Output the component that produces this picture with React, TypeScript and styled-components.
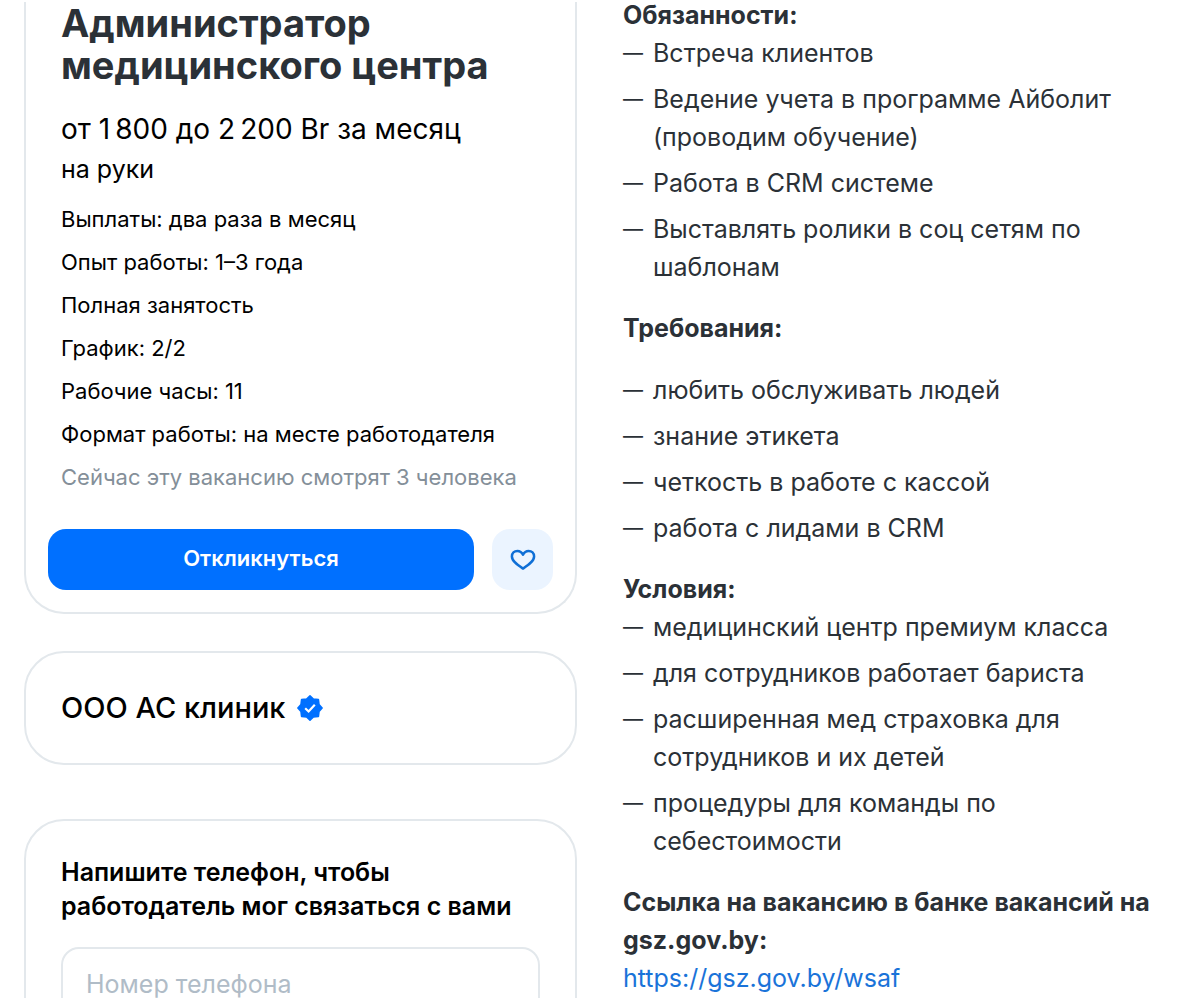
import React from "react";
import styled, { createGlobalStyle } from "styled-components";

const GlobalStyle = createGlobalStyle`
  * { box-sizing: border-box; }
  body {
    margin: 0;
    background: #ffffff;
    color: #000000;
    font-family: Inter, "Liberation Sans", sans-serif;
  }
  h1, h2, h3, p, ul { margin: 0; padding: 0; font-size: inherit; }
`;

const Page = styled.main`
  display: grid;
  grid-template-columns: 553fr 537fr;
  align-items: start;
  gap: 46px;
  height: 100vh;
  padding: 0 40px 0 24px;
  border: solid #ffffff;
  border-width: 2px 0;
  overflow: hidden;
`;

const Column = styled.div`
  display: flex;
  flex-direction: column;
  min-width: 0;
`;

const Card = styled.section<{ $open?: boolean }>`
  border: 2px solid #e3e8ec;
  border-radius: ${(p) => (p.$open ? "0 0 40px 40px" : "40px")};
  border-top-width: ${(p) => (p.$open ? "0" : "2px")};
`;

const Summary = styled.div`
  padding: 0 35px;
`;

const Title = styled.h1`
  color: #2b3137;
  font-size: 38px;
  line-height: 42px;
  font-weight: 700;
`;

const Salary = styled.p`
  margin-top: 22px;
  font-size: 28px;
  line-height: 42px;
`;

const SalaryNote = styled.p`
  font-size: 25px;
  line-height: 38px;
`;

const Facts = styled.ul`
  margin-top: 10px;
  list-style: none;
  font-size: 22px;
  line-height: 43px;
`;

const Fact = styled.li<{ $muted?: boolean }>`
  color: ${(p) => (p.$muted ? "#848f99" : "inherit")};
`;

const Actions = styled.div`
  display: flex;
  gap: 18px;
  padding: 30px 22px 22px;
`;

const ApplyButton = styled.button`
  flex: 1;
  height: 61px;
  padding: 0 0 3px;
  border: 0;
  border-radius: 18px;
  background: #0070ff;
  color: #ffffff;
  font-family: inherit;
  font-size: 22px;
  font-weight: 600;
`;

const FavoriteButton = styled.button`
  display: flex;
  align-items: center;
  justify-content: center;
  width: 61px;
  height: 61px;
  padding: 0;
  border: 0;
  border-radius: 18px;
  background: #ebf4ff;
  color: #0f6fd6;
`;

const EmployerCard = styled(Card)`
  display: flex;
  align-items: center;
  gap: 12px;
  margin-top: 37px;
  padding: 36px 35px;
`;

const EmployerName = styled.h2`
  font-size: 29px;
  line-height: 38px;
  font-weight: 500;
`;

const PhoneCard = styled(Card)`
  margin-top: 54px;
  padding: 34px 35px 40px;
`;

const PhoneLabel = styled.label`
  display: block;
  font-size: 25px;
  line-height: 34px;
  font-weight: 600;
`;

const PhoneInput = styled.input`
  display: block;
  width: 100%;
  height: 73px;
  margin-top: 24px;
  padding: 0 23px;
  border: 2px solid #e3e8ec;
  border-radius: 18px;
  background: #ffffff;
  font-family: inherit;
  font-size: 25px;
  &::placeholder { color: #b0bcc7; opacity: 1; }
`;

const Description = styled(Column)`
  gap: 23px;
  margin-top: -6px;
  color: #2b3137;
  font-size: 25px;
  line-height: 38px;
`;

const Block = styled.section<{ $spaced?: boolean }>`
  display: flex;
  flex-direction: column;
  gap: ${(p) => (p.$spaced ? "24px" : "0")};
`;

const Heading = styled.h3`
  font-weight: 700;
`;

const Items = styled.ul`
  display: flex;
  flex-direction: column;
  gap: 8px;
  list-style: none;
`;

const Item = styled.li`
  display: grid;
  grid-template-columns: 30px 1fr;
  &::before { content: "—"; font-size: 20px; }
`;

const Link = styled.a`
  color: #1a73d9;
  text-decoration: none;
`;

const facts = [
  "Выплаты: два раза в месяц",
  "Опыт работы: 1–3 года",
  "Полная занятость",
  "График: 2/2",
  "Рабочие часы: 11",
  "Формат работы: на месте работодателя",
];

const blocks = [
  {
    title: "Обязанности:",
    items: [
      "Встреча клиентов",
      "Ведение учета в программе Айболит (проводим обучение)",
      "Работа в CRM системе",
      "Выставлять ролики в соц сетям по шаблонам",
    ],
  },
  {
    title: "Требования:",
    spaced: true,
    items: [
      "любить обслуживать людей",
      "знание этикета",
      "четкость в работе с кассой",
      "работа с лидами в CRM",
    ],
  },
  {
    title: "Условия:",
    items: [
      "медицинский центр премиум класса",
      "для сотрудников работает бариста",
      "расширенная мед страховка для сотрудников и их детей",
      "процедуры для команды по себестоимости",
    ],
  },
];

const HeartIcon = () => (
  <svg width="26" height="22" viewBox="0 0 26 22" fill="none" aria-hidden="true">
    <path
      d="M13 5.8C11.8 3.2 9.8 1.9 7.4 1.9C4.3 1.9 1.9 4.2 1.9 7.4C1.9 12.2 7.6 16 13 19.6C18.4 16 24.1 12.2 24.1 7.4C24.1 4.2 21.7 1.9 18.6 1.9C16.2 1.9 14.2 3.2 13 5.8Z"
      stroke="currentColor"
      strokeWidth="2.5"
      strokeLinejoin="round"
    />
  </svg>
);

const VerifiedIcon = () => (
  <svg width="26" height="26" viewBox="0 0 26 26" role="img" aria-label="Проверенный работодатель">
    <path
      d="M13 .9L16.4 4L21.4 4.6L22 9.6L25.1 13L22 16.4L21.4 21.4L16.4 22L13 25.1L9.6 22L4.6 21.4L4 16.4L.9 13L4 9.6L4.6 4.6L9.6 4Z"
      fill="#0070ff"
      stroke="#0070ff"
      strokeWidth="1.6"
      strokeLinejoin="round"
    />
    <path d="M8.2 13.2L11.6 16.5L17.8 9.8" fill="none" stroke="#fff" strokeWidth="2.2" />
  </svg>
);

export default function App() {
  return (
    <>
      <GlobalStyle />
      <Page>
        <Column>
          <Card $open>
            <Summary>
              <Title>Администратор медицинского центра</Title>
              <Salary>от 1{"\u202f"}800 до 2{"\u202f"}200 Br за месяц</Salary>
              <SalaryNote>на руки</SalaryNote>
              <Facts>
                {facts.map((f) => (
                  <Fact key={f}>{f}</Fact>
                ))}
                <Fact $muted>Сейчас эту вакансию смотрят 3 человека</Fact>
              </Facts>
            </Summary>
            <Actions>
              <ApplyButton type="button">Откликнуться</ApplyButton>
              <FavoriteButton type="button" aria-label="В избранное">
                <HeartIcon />
              </FavoriteButton>
            </Actions>
          </Card>
          <EmployerCard>
            <EmployerName>ООО АС клиник</EmployerName>
            <VerifiedIcon />
          </EmployerCard>
          <PhoneCard>
            <PhoneLabel htmlFor="phone">
              Напишите телефон, чтобы работодатель мог связаться с вами
            </PhoneLabel>
            <PhoneInput id="phone" type="tel" placeholder="Номер телефона" />
          </PhoneCard>
        </Column>
        <Description>
          {blocks.map((b) => (
            <Block key={b.title} $spaced={b.spaced}>
              <Heading>{b.title}</Heading>
              <Items>
                {b.items.map((i) => (
                  <Item key={i}>{i}</Item>
                ))}
              </Items>
            </Block>
          ))}
          <Block>
            <Heading>Ссылка на вакансию в банке вакансий на gsz.gov.by:</Heading>
            <Link href="https://gsz.gov.by/wsaf">https://gsz.gov.by/wsaf</Link>
          </Block>
        </Description>
      </Page>
    </>
  );
}
